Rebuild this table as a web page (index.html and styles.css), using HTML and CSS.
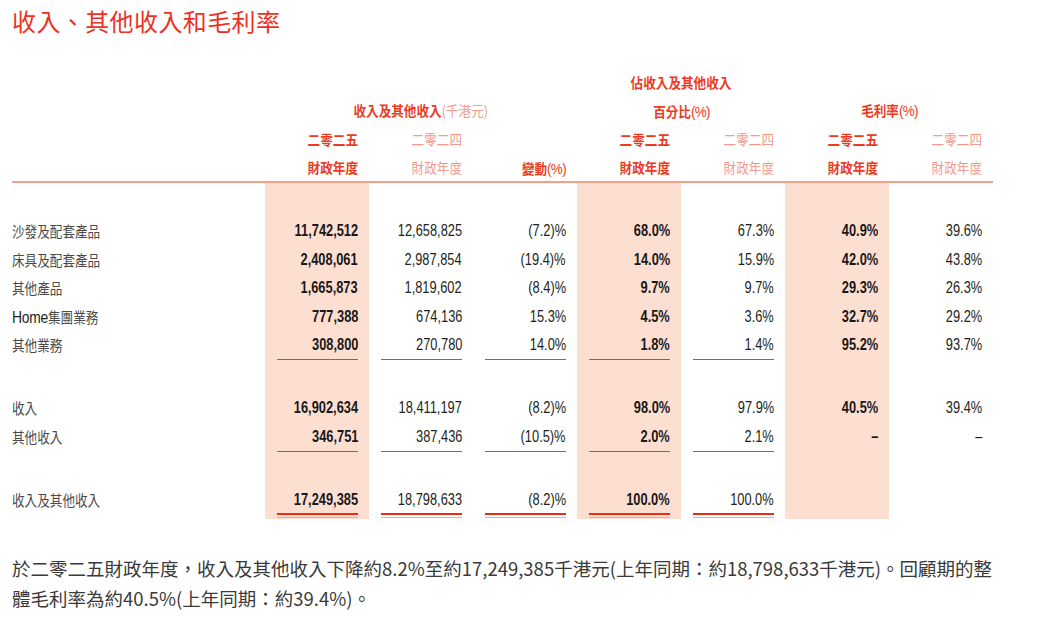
FILE: index.html
```html
<!DOCTYPE html>
<html lang="zh-Hant">
<head>
<meta charset="utf-8">
<title>收入、其他收入和毛利率</title>
<link rel="stylesheet" href="styles.css">
</head>
<body>
<main class="page">
  <h1 class="title">收入、其他收入和毛利率</h1>

  <section class="fin">
    <div class="cols head">
      <div class="grp g1"><span class="sq">收入及其他收入<span class="lt">(千港元)</span></span></div>
      <div class="grp g2"><div><span class="sq">佔收入及其他收入</span></div><div><span class="sq">百分比<span class="n">(%)</span></span></div></div>
      <div class="grp g3"><span class="sq">毛利率<span class="n">(%)</span></span></div>

      <div class="yr cur c1"><div><span class="sq">二零二五</span></div><div><span class="sq">財政年度</span></div></div>
      <div class="yr prev c2"><div><span class="sq">二零二四</span></div><div><span class="sq">財政年度</span></div></div>
      <div class="yr chg c3"><span class="sq">變動<span class="n">(%)</span></span></div>
      <div class="yr cur c4"><div><span class="sq">二零二五</span></div><div><span class="sq">財政年度</span></div></div>
      <div class="yr prev c5"><div><span class="sq">二零二四</span></div><div><span class="sq">財政年度</span></div></div>
      <div class="yr cur c6"><div><span class="sq">二零二五</span></div><div><span class="sq">財政年度</span></div></div>
      <div class="yr prev c7"><div><span class="sq">二零二四</span></div><div><span class="sq">財政年度</span></div></div>
    </div>

    <div class="cols body">
      <div class="stripe c1"></div>
      <div class="stripe c4"></div>
      <div class="stripe c6"></div>

      <div class="row r2">
        <div class="lbl"><span class="lt2">沙發及配套產品</span></div>
        <div class="cell b"><span class="v"><span class="t">11,742,512</span></span></div>
        <div class="cell"><span class="v"><span class="t">12,658,825</span></span></div>
        <div class="cell"><span class="v"><span class="t">(7.2)%</span></span></div>
        <div class="cell b"><span class="v"><span class="t">68.0%</span></span></div>
        <div class="cell"><span class="v"><span class="t">67.3%</span></span></div>
        <div class="cell b"><span class="v"><span class="t">40.9%</span></span></div>
        <div class="cell"><span class="v"><span class="t">39.6%</span></span></div>
      </div>
      <div class="row r3">
        <div class="lbl"><span class="lt2">床具及配套產品</span></div>
        <div class="cell b"><span class="v"><span class="t">2,408,061</span></span></div>
        <div class="cell"><span class="v"><span class="t">2,987,854</span></span></div>
        <div class="cell"><span class="v"><span class="t">(19.4)%</span></span></div>
        <div class="cell b"><span class="v"><span class="t">14.0%</span></span></div>
        <div class="cell"><span class="v"><span class="t">15.9%</span></span></div>
        <div class="cell b"><span class="v"><span class="t">42.0%</span></span></div>
        <div class="cell"><span class="v"><span class="t">43.8%</span></span></div>
      </div>
      <div class="row r4">
        <div class="lbl"><span class="lt2">其他產品</span></div>
        <div class="cell b"><span class="v"><span class="t">1,665,873</span></span></div>
        <div class="cell"><span class="v"><span class="t">1,819,602</span></span></div>
        <div class="cell"><span class="v"><span class="t">(8.4)%</span></span></div>
        <div class="cell b"><span class="v"><span class="t">9.7%</span></span></div>
        <div class="cell"><span class="v"><span class="t">9.7%</span></span></div>
        <div class="cell b"><span class="v"><span class="t">29.3%</span></span></div>
        <div class="cell"><span class="v"><span class="t">26.3%</span></span></div>
      </div>
      <div class="row r5">
        <div class="lbl"><span class="lt2"><span class="home">Home</span>集團業務</span></div>
        <div class="cell b"><span class="v"><span class="t">777,388</span></span></div>
        <div class="cell"><span class="v"><span class="t">674,136</span></span></div>
        <div class="cell"><span class="v"><span class="t">15.3%</span></span></div>
        <div class="cell b"><span class="v"><span class="t">4.5%</span></span></div>
        <div class="cell"><span class="v"><span class="t">3.6%</span></span></div>
        <div class="cell b"><span class="v"><span class="t">32.7%</span></span></div>
        <div class="cell"><span class="v"><span class="t">29.2%</span></span></div>
      </div>
      <div class="row r6">
        <div class="lbl"><span class="lt2">其他業務</span></div>
        <div class="cell b ul"><span class="v"><span class="t">308,800</span></span></div>
        <div class="cell ul"><span class="v"><span class="t">270,780</span></span></div>
        <div class="cell ul"><span class="v"><span class="t">14.0%</span></span></div>
        <div class="cell b ul"><span class="v"><span class="t">1.8%</span></span></div>
        <div class="cell ul"><span class="v"><span class="t">1.4%</span></span></div>
        <div class="cell b"><span class="v"><span class="t">95.2%</span></span></div>
        <div class="cell"><span class="v"><span class="t">93.7%</span></span></div>
      </div>

      <div class="row r8">
        <div class="lbl"><span class="lt2">收入</span></div>
        <div class="cell b"><span class="v"><span class="t">16,902,634</span></span></div>
        <div class="cell"><span class="v"><span class="t">18,411,197</span></span></div>
        <div class="cell"><span class="v"><span class="t">(8.2)%</span></span></div>
        <div class="cell b"><span class="v"><span class="t">98.0%</span></span></div>
        <div class="cell"><span class="v"><span class="t">97.9%</span></span></div>
        <div class="cell b"><span class="v"><span class="t">40.5%</span></span></div>
        <div class="cell"><span class="v"><span class="t">39.4%</span></span></div>
      </div>
      <div class="row r9">
        <div class="lbl"><span class="lt2">其他收入</span></div>
        <div class="cell b ul"><span class="v"><span class="t">346,751</span></span></div>
        <div class="cell ul"><span class="v"><span class="t">387,436</span></span></div>
        <div class="cell ul"><span class="v"><span class="t">(10.5)%</span></span></div>
        <div class="cell b ul"><span class="v"><span class="t">2.0%</span></span></div>
        <div class="cell ul"><span class="v"><span class="t">2.1%</span></span></div>
        <div class="cell b"><span class="v"><span class="t">–</span></span></div>
        <div class="cell"><span class="v"><span class="t">–</span></span></div>
      </div>

      <div class="row r11">
        <div class="lbl"><span class="lt2">收入及其他收入</span></div>
        <div class="cell b dbl"><span class="v"><span class="in"><span class="t">17,249,385</span></span></span></div>
        <div class="cell dbl"><span class="v"><span class="in"><span class="t">18,798,633</span></span></span></div>
        <div class="cell dbl"><span class="v"><span class="in"><span class="t">(8.2)%</span></span></span></div>
        <div class="cell b dbl"><span class="v"><span class="in"><span class="t">100.0%</span></span></span></div>
        <div class="cell dbl"><span class="v"><span class="in"><span class="t">100.0%</span></span></span></div>
        <div class="cell"></div>
        <div class="cell"></div>
      </div>
    </div>
  </section>

  <p class="note">於二零二五財政年度，收入及其他收入下降約8.2%至約17,249,385千港元(上年同期：約18,798,633千港元)。回顧期的整體毛利率為約40.5%(上年同期：約39.4%)。</p>
</main>
</body>
</html>
```

FILE: styles.css
```css
body {
  margin: 0;
  background: #ffffff;
  font-family: "Noto Sans CJK TC", "Noto Sans", sans-serif;
}

.page {
  width: 981px;
  padding: 0 12px;
}

.title {
  margin: 0;
  padding-top: 5px;
  font-size: 24px;
  line-height: 32px;
  font-weight: 400;
  letter-spacing: 0.4px;
  color: #ee3124;
}

.fin {
  margin-top: 31px;
}

.cols {
  display: grid;
  grid-template-columns: 253px repeat(7, 104px);
}

/* condensed latin inside headers */
.n {
  font-family: "Liberation Sans", sans-serif;
  font-size: 15px;
  font-weight: 400;
  letter-spacing: -0.8px;
}

/* header */
.head {
  grid-template-rows: 28px 29px 29px 27px;
  border-bottom: 2px solid #f89d88;
  font-size: 14px;
}

.sq {
  display: inline-block;
  transform: scaleX(0.9);
  white-space: nowrap;
}

.grp {
  text-align: center;
  font-weight: 700;
  color: #ec3a22;
  line-height: 29px;
}

.grp .sq {
  transform-origin: center;
}

.g1 { grid-column: 2 / 5; grid-row: 2; }
.g2 { grid-column: 5 / 7; grid-row: 1 / 3; line-height: 28.5px; }
.g3 { grid-column: 7 / 9; grid-row: 2; }

.lt {
  font-weight: 400;
  color: #f39a8d;
}

.yr {
  grid-row: 3 / 5;
  text-align: right;
  padding-right: 11px;
  line-height: 28px;
}

.yr .sq {
  transform-origin: right center;
}

.yr.cur {
  color: #ec3a22;
  font-weight: 700;
}

.yr.prev {
  color: #f39a8d;
  font-weight: 400;
}

.yr.chg {
  grid-row: 4;
  color: #ec3a22;
  font-weight: 700;
}

.c1 { grid-column: 2; }
.c2 { grid-column: 3; }
.c3 { grid-column: 4; }
.c4 { grid-column: 5; }
.c5 { grid-column: 6; }
.c6 { grid-column: 7; }
.c7 { grid-column: 8; }

/* body */
.body {
  grid-template-rows: 35px repeat(5, 28.5px) 34.5px 29px 29px 34px 32px;
}

.stripe {
  grid-row: 1 / -1;
  background: #fddfd1;
}

.row {
  grid-column: 1 / -1;
  display: grid;
  grid-template-columns: subgrid;
}

.r2 { grid-row: 2; }
.r3 { grid-row: 3; }
.r4 { grid-row: 4; }
.r5 { grid-row: 5; }
.r6 { grid-row: 6; }
.r8 { grid-row: 8; }
.r9 { grid-row: 9; }
.r11 { grid-row: 11; }

.lbl {
  padding-top: 3px;
  font-size: 15px;
  line-height: 20px;
  color: #4a4a4a;
}

.lt2 {
  display: inline-block;
  white-space: nowrap;
  transform: scaleX(0.84);
  transform-origin: left center;
}

.home {
  font-family: "Liberation Sans", sans-serif;
  font-size: 16.5px;
  letter-spacing: -0.3px;
  color: #231f20;
}

.cell {
  padding: 3px 11px 0 12px;
  font-family: "Liberation Sans", sans-serif;
  font-size: 17px;
  line-height: 20px;
  color: #231f20;
}

.cell.b {
  font-weight: 700;
  color: #1a1718;
}

.v {
  display: flex;
  justify-content: flex-end;
}

.t {
  display: inline-block;
  white-space: nowrap;
  transform: scaleX(0.755);
  transform-origin: right center;
}

.ul .v {
  border-bottom: 1px solid #ee3d23;
  padding-bottom: 4px;
}

.dbl {
  padding-top: 2.5px;
}

.dbl .v {
  display: block;
  border-bottom: 1px solid #f8a894;
  padding-bottom: 2px;
}

.dbl .in {
  display: flex;
  justify-content: flex-end;
  border-bottom: 2px solid #ec2b12;
  padding-bottom: 3.5px;
}

.note {
  margin: 34px 0 0;
  font-size: 18.5px;
  line-height: 30px;
  color: #3a3a3a;
}
```
